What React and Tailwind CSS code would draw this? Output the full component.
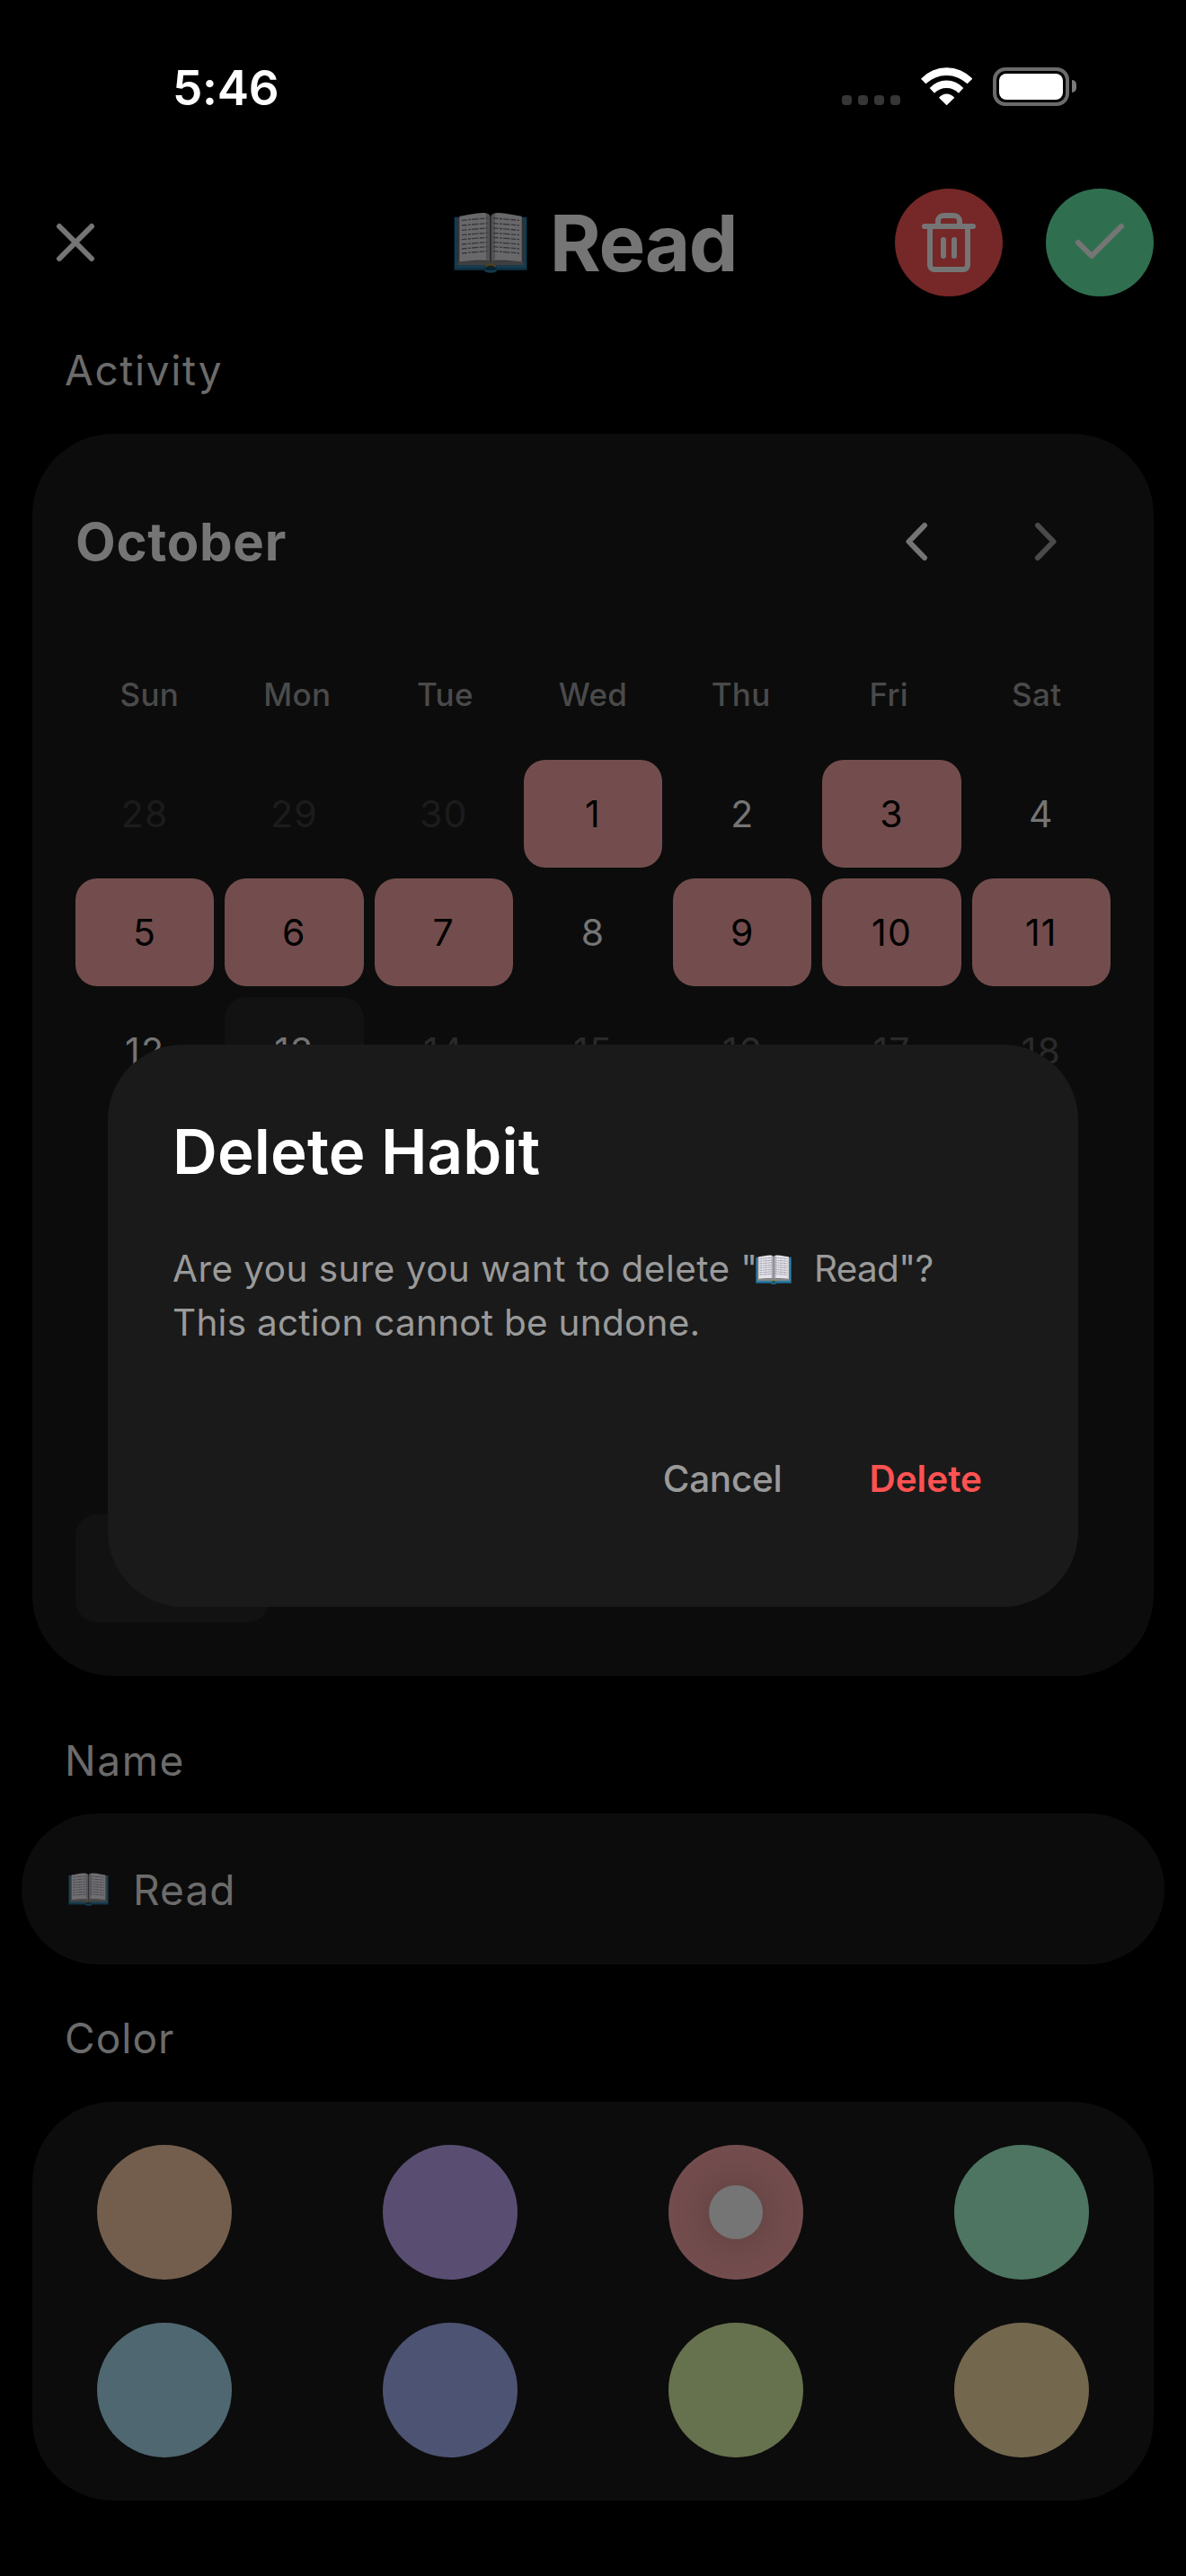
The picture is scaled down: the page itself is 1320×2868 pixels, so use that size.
const WEEKDAYS = ["Sun", "Mon", "Tue", "Wed", "Thu", "Fri", "Sat"];

const DAYS = [
  { n: 28, s: "out" }, { n: 29, s: "out" }, { n: 30, s: "out" }, { n: 1, s: "done" }, { n: 2, s: "past" }, { n: 3, s: "done" }, { n: 4, s: "past" },
  { n: 5, s: "done" }, { n: 6, s: "done" }, { n: 7, s: "done" }, { n: 8, s: "past" }, { n: 9, s: "done" }, { n: 10, s: "done" }, { n: 11, s: "done" },
  { n: 12, s: "past" }, { n: 13, s: "today" }, { n: 14, s: "future" }, { n: 15, s: "future" }, { n: 16, s: "future" }, { n: 17, s: "future" }, { n: 18, s: "future" },
];

const DAY_STYLES = {
  out: "text-[#1c1c1c]",
  done: "bg-[#734d4d] text-black",
  past: "text-[#757575]",
  today: "bg-[#121212] text-[#757575]",
  future: "text-[#2a2a2a]",
};

const SWATCHES = [
  { color: "bg-[#735e4d]" },
  { color: "bg-[#594e72]" },
  { color: "bg-[#734d4d]", selected: true },
  { color: "bg-[#4d7561]" },
  { color: "bg-[#4e6771]" },
  { color: "bg-[#4d5372]" },
  { color: "bg-[#66724d]" },
  { color: "bg-[#73674d]" },
];

const TEXT_ROWS = [24, 41, 57, 73, 88, 104, 119, 134];

function Book({ className }) {
  return (
    <svg viewBox="0 0 246 204" className={className} aria-hidden="true">
      <path d="M2 17H244V194H146Q140 203 123 203Q106 203 100 194H2Z" fill="#2c82ac" />
      <path d="M2 188H244V194H2Z" fill="#1d5f82" />
      <path d="M12 22H234V178H12Z" fill="#6f6c6c" />
      <path d="M16 164H230L234 177H142L123 180L104 177H12Z" fill="#8d8a8a" />
      <path d="M19 14C50 10 70 4 96 3C110 3 119 7 121 14V164C112 159 50 162 19 166Z" fill="#e3e2ea" />
      <path d="M227 14C196 10 176 4 150 3C136 3 127 7 125 14V164C134 159 196 162 227 166Z" fill="#e3e2ea" />
      <path d="M108 5Q119 7 121 14V164Q116 161 108 161Z" fill="#b3b2ba" />
      <path d="M138 5Q127 7 125 14V164Q130 161 138 161Z" fill="#b3b2ba" />
      <path d="M121 14H125V168H121Z" fill="#4b494b" />
      <path d="M102 182Q123 168 144 182L138 192Q123 198 108 192Z" fill="#184c68" />
      <path d="M105 183Q123 169 141 183" fill="none" stroke="#c29a2c" strokeWidth="5" />
      {TEXT_ROWS.map((y) => (
        <g key={y} fill="none" stroke="#77757f" strokeWidth="4" strokeDasharray="17 4 9 3 22 4">
          <path d={`M27 ${y + 4}Q70 ${y} 112 ${y - 3}`} />
          <path d={`M132 ${y - 3}Q176 ${y} 219 ${y + 4}`} />
        </g>
      ))}
    </svg>
  );
}

function StatusBar() {
  return (
    <div className="flex h-[210px] items-start justify-between pt-[75px] pr-[122px] pl-[192px]">
      <span className="mt-0.5 text-[53px] leading-[43px] font-semibold tracking-[-0.3px] text-white">5:46</span>
      <div className="flex h-[43px]">
        <div className="mb-px flex gap-[7px] self-end">
          {[0, 1, 2, 3].map((i) => (
            <span key={i} className="size-[11px] rounded-[4px] bg-[#363636]" />
          ))}
        </div>
        <svg viewBox="315 45 172 127" className="ml-[23px] h-[42.3px] w-[57.3px]" fill="#fff">
          <path d="M315 83A118 118 0 0 1 487 83L470 100A100 100 0 0 0 331 100Z" />
          <path d="M344 114A76 76 0 0 1 457 114L441 131A57 57 0 0 0 360 131Z" />
          <path d="M375 146A34 34 0 0 1 427 146L401 172Z" />
        </svg>
        <div className="ml-[22.7px] h-[43px] w-[85px] rounded-[14px] border-4 border-[#6b6b6b] p-[3px]">
          <div className="h-full w-full rounded-[8px] bg-white" />
        </div>
        <span className="mt-[14px] ml-[3px] h-[14px] w-[5px] rounded-r-full bg-[#7a7a7a]" />
      </div>
    </div>
  );
}

function Header() {
  return (
    <header className="grid h-[120px] grid-cols-[1fr_auto_1fr] items-center px-9">
      <svg viewBox="0 0 48 48" className="ml-6 size-12" fill="none" stroke="#757575" strokeWidth="6" strokeLinecap="round">
        <path d="M6 6L42 42M42 6L6 42" />
      </svg>
      <h1 className="flex items-center pl-[5px] text-[87px] leading-[120px] font-bold tracking-[-1.4px] text-[#757575]">
        <Book className="mr-[25px] h-[68px] w-[82px] opacity-[0.46]" />
        <span className="pt-[2px] leading-[118px]">Read</span>
      </h1>
      <div className="flex justify-self-end gap-12">
        <button className="size-[120px] rounded-full bg-[#762727]">
          <svg viewBox="18 30 360 360" className="size-full" fill="none" stroke="#757575" strokeWidth="18" strokeLinecap="round">
            <path d="M117 156H279" />
            <path d="M135 156V286a14 14 0 0 0 14 14H247a14 14 0 0 0 14-14V156" />
            <path d="M162 156V138a18 18 0 0 1 18-18H216a18 18 0 0 1 18 18V156" />
            <path d="M180 201V255M216 201V255" />
          </svg>
        </button>
        <button className="size-[120px] rounded-full bg-[#2f6f50]">
          <svg viewBox="522 30 360 360" className="size-full" fill="none" stroke="#757575" strokeWidth="18" strokeLinecap="round" strokeLinejoin="round">
            <path d="M630 210L675 255L774 156" />
          </svg>
        </button>
      </div>
    </header>
  );
}

function Calendar() {
  return (
    <section className="mx-9 mt-[41px] flex h-[1383px] flex-col rounded-[90px] bg-[#0c0c0c] px-12 pt-[84px] pb-[60px]">
      <div className="flex h-[72px] items-center pr-[57px]">
        <h2 className="mr-auto text-[58px] leading-[72px] font-bold tracking-[0.75px] text-[#757575]">October</h2>
        <svg viewBox="0 0 30 48" className="mr-[114px] h-12 w-[30px]" fill="none" stroke="#757575" strokeWidth="6" strokeLinecap="round" strokeLinejoin="round">
          <path d="M24 6L6.500 24L24 42" />
        </svg>
        <svg viewBox="0 0 30 48" className="h-12 w-[30px]" fill="none" stroke="#4a4a4a" strokeWidth="6" strokeLinecap="round" strokeLinejoin="round">
          <path d="M6 6L23.500 24L6 42" />
        </svg>
      </div>
      <div className="mt-[110px] grid grid-cols-7 text-center text-[35px] leading-[48px] font-medium tracking-[0.3px] text-[#4a4a4a]">
        {WEEKDAYS.map((d) => (
          <span key={d}>{d}</span>
        ))}
      </div>
      <div className="mt-[49px] grid auto-rows-[120px] grid-cols-7 gap-3 text-[41px] tracking-[1.2px]">
        {DAYS.map(({ n, s }) => (
          <div key={n} className={`flex items-center justify-center rounded-[24px] pt-[2px] ${DAY_STYLES[s]}`}>
            {n}
          </div>
        ))}
      </div>
      <div className="mt-auto h-[120px] w-[216px] rounded-[24px] bg-[#121212]" />
    </section>
  );
}

function Label({ className, children }) {
  return <div className={`pl-[72px] text-[46px] leading-[60px] text-[#6b6b6b] ${className}`}>{children}</div>;
}

function DeleteDialog() {
  return (
    <div role="dialog" className="absolute top-[1163px] left-[120px] h-[626px] w-[1080px] rounded-[84px] bg-[#1a1a1a] px-[72px] pt-[77px]">
      <h2 className="text-[69px] leading-[84px] font-semibold tracking-[0.1px] text-white">Delete Habit</h2>
      <div className="mt-[59px] text-[40.5px] leading-[60px] whitespace-nowrap text-[#9a9a9a]">
        <p className="flex items-center">
          <span className="w-[649px] tracking-[0.44px]">Are you sure you want to delete "</span>
          <Book className="h-[33px] w-10" />
          <span className="ml-[25px] tracking-[-0.7px]">Read"?</span>
        </p>
        <p className="tracking-[0.25px]">This action cannot be undone.</p>
      </div>
      <div className="mt-[114px] flex justify-end gap-[97px] pr-[35px] text-[40.5px] leading-[60px]">
        <button className="font-medium tracking-[-0.3px] text-[#9a9a9a]">Cancel</button>
        <button className="font-semibold text-[#ff5252]">Delete</button>
      </div>
    </div>
  );
}

export default function App() {
  return (
    <div className="relative h-[2868px] w-[1320px] overflow-hidden bg-black font-['Inter',sans-serif]">
      <StatusBar />
      <Header />
      <Label className="mt-[52px] tracking-[1.65px]">Activity</Label>
      <Calendar />
      <Label className="mt-16 tracking-[1.6px]">Name</Label>
      <div className="mx-6 mt-[29px] flex h-[168px] items-center rounded-full bg-[#0c0c0c] pl-[52px] text-[46px] text-[#6b6b6b]">
        <Book className="h-[37px] w-[45px] opacity-[0.46]" />
        <span className="ml-[27px] pt-[2px] leading-[60px] tracking-[1.1px]">Read</span>
      </div>
      <Label className="mt-[52px] tracking-[1.05px]">Color</Label>
      <section className="mx-9 mt-[41px] grid grid-cols-[repeat(4,150px)] justify-between gap-y-12 rounded-[90px] bg-[#0c0c0c] px-[72px] py-12">
        {SWATCHES.map(({ color, selected }) => (
          <div key={color} className={`flex size-[150px] items-center justify-center rounded-full ${color}`}>
            {selected && <span className="size-[60px] rounded-full bg-[#757575] shadow-[0_0_40px_4px_rgba(0,0,0,0.18)]" />}
          </div>
        ))}
      </section>
      <DeleteDialog />
    </div>
  );
}
